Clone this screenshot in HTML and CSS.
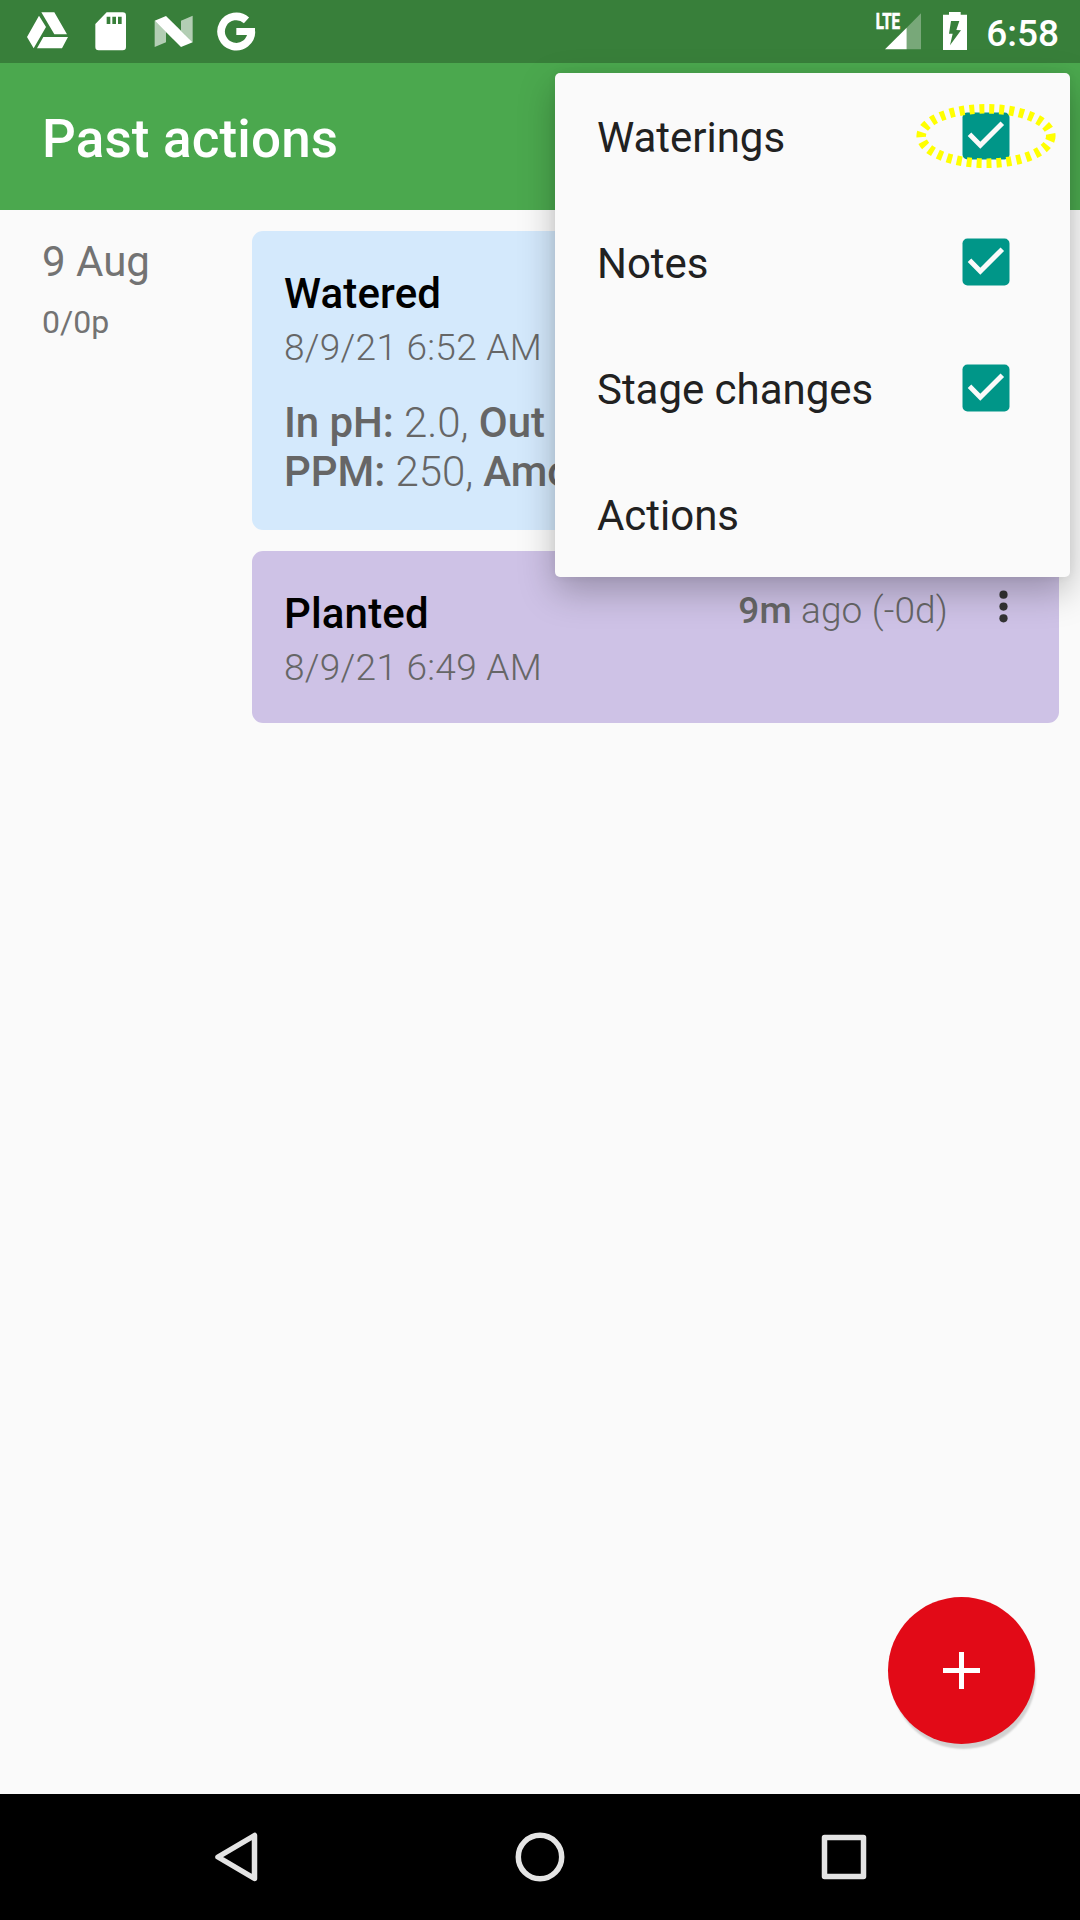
FILE: index.html
```html
<!DOCTYPE html>
<html lang="en">
<head>
<meta charset="utf-8">
<title>Past actions</title>
<link rel="stylesheet" href="styles.css">
</head>
<body>
<div class="screen">
  <header class="status-bar">
    <div class="notifications">
      <svg width="44" height="44" viewBox="78 30 132 132" fill="#fff"><path d="M124 37h39l38 66h-38zM117 47l21 34-37 64-20-34zM130 111h74l-18 34h-75z"/></svg>
      <svg width="34" height="44" viewBox="282 30 102 132" fill="#fff"><path fill-rule="evenodd" d="M320 37h48q10 0 10 10v94q0 10-10 10h-72q-10 0-10-10V72zM320 50v22h11V50zM337 50v22h11V50zM354 50v22h11V50z"/></svg>
      <svg width="42" height="44" viewBox="459 30 126 132" fill="#fff"><path opacity=".62" d="M464 62l34 33v32l-34 14zM543 62l35-15v80l-35-35z"/><path d="M464 62l34-14 80 79-35 14z"/></svg>
      <svg width="41" height="44" viewBox="648 30 123 132"><path fill="none" stroke="#fff" stroke-width="23" d="M739.500 61A45.500 45.500 0 1 0 754.300 94.500"/><path fill="#fff" d="M709 84h56v11l-10 10h-46z"/></svg>
    </div>
    <div class="system">
      <svg class="signal" width="48" height="44" viewBox="105 30 144 132" fill="#fff"><path opacity=".32" d="M200 83l43-43v108h-43z"/><path d="M135 148l65-65v65z"/><text class="lte" x="107" y="87" textLength="73" lengthAdjust="spacingAndGlyphs">LTE</text></svg>
      <svg class="battery" width="26" height="44" viewBox="306 30 78 132" fill="#fff"><path fill-rule="evenodd" d="M327 36h35v8h19v106h-72V44h18zM333 63l-6 38h11l-8 35 33-45-14-1 9-27z"/></svg>
      <span class="clock">6:58</span>
    </div>
  </header>

  <div class="toolbar"><h1>Past actions</h1></div>

  <main class="timeline">
    <div class="day">
      <div class="day-date">9 Aug</div>
      <div class="day-stage">0/0p</div>
    </div>
    <div class="entries">
      <article class="card watered">
        <h2>Watered</h2>
        <div class="time">8/9/21 6:52 AM</div>
        <p class="summary"><b>In pH:</b> 2.0, <b>Out</b><br><b>PPM:</b> 250, <b>Amount</b></p>
      </article>
      <article class="card planted">
        <div class="info">
          <h2>Planted</h2>
          <div class="time">8/9/21 6:49 AM</div>
        </div>
        <div class="ago"><b>9m</b> ago (-0d)</div>
        <svg class="more" width="12" height="34" viewBox="0 0 12 34" fill="#333"><circle cx="5.500" cy="4.700" r="4.100"/><circle cx="5.500" cy="16.600" r="4.100"/><circle cx="5.500" cy="28.300" r="4.100"/></svg>
      </article>
    </div>
  </main>

  <nav class="nav-bar">
    <svg width="50" height="54" viewBox="0 0 50 54"><path d="M43.500 5.500v43L7 27z"/></svg>
    <svg width="54" height="54" viewBox="0 0 54 54"><circle cx="27" cy="27" r="21.700"/></svg>
    <svg width="50" height="54" viewBox="0 0 50 54"><path d="M5.500 7.500h39v39h-39z"/></svg>
  </nav>

  <button class="fab" aria-label="Add"><svg width="37" height="37" viewBox="0 0 37 37" fill="#fff"><path d="M16 0h5v16h16v5H21v16h-5V21H0v-5h16z"/></svg></button>

  <div class="menu">
    <div class="item">Waterings<svg class="check" width="48" height="48" viewBox="0 0 48 48"><rect x=".5" y=".5" width="47" height="47" rx="5"/><path d="M7.500 22.300L18.300 33.200 40.300 11.200"/></svg></div>
    <div class="item">Notes<svg class="check" width="48" height="48" viewBox="0 0 48 48"><rect x=".5" y=".5" width="47" height="47" rx="5"/><path d="M7.500 22.300L18.300 33.200 40.300 11.200"/></svg></div>
    <div class="item">Stage changes<svg class="check" width="48" height="48" viewBox="0 0 48 48"><rect x=".5" y=".5" width="47" height="47" rx="5"/><path d="M7.500 22.300L18.300 33.200 40.300 11.200"/></svg></div>
    <div class="item">Actions</div>
  </div>
  <svg class="highlight" width="142" height="66" viewBox="0 0 142 66"><ellipse cx="71" cy="33" rx="64.800" ry="27.200"/></svg>
</div>
</body>
</html>
```
FILE: styles.css
```css
* { box-sizing: border-box; }
body, h1, h2, p { margin: 0; }
body { font-family: Roboto, sans-serif; background: #fafafa; }
svg { display: block; flex: none; }
b { font-weight: 500; }

.screen {
  position: relative;
  display: flex;
  flex-direction: column;
  width: 1080px;
  height: 1920px;
  overflow: hidden;
}

.status-bar {
  display: flex;
  justify-content: space-between;
  height: 63px;
  padding: 10px 21px 0 26px;
  background: #387f3a;
  color: #fff;
}
.notifications { display: flex; }
.notifications svg:nth-child(2) { margin-left: 24px; }
.notifications svg:nth-child(3) { margin-left: 25px; }
.notifications svg:nth-child(4) { margin-left: 21px; }
.system { display: flex; }
.lte { font: 700 66px Roboto, sans-serif; stroke: #fff; stroke-width: 2px; }
.battery { margin-left: 19px; }
.clock {
  margin-left: 18px;
  font-size: 37px;
  font-weight: 500;
  line-height: 47px;
}

.toolbar {
  display: flex;
  align-items: center;
  height: 147px;
  padding: 5px 42px 0;
  background: #4ba84e;
  color: #fff;
}
h1 { font-size: 53px; font-weight: 500; line-height: 62px; letter-spacing: .15px; }

.timeline {
  flex: 1;
  display: grid;
  grid-template-columns: 210px 807px;
  padding: 21px 21px 0 42px;
}
.day { color: #737373; }
.day-date { font-size: 42px; line-height: 49px; padding-top: 6px; }
.day-stage { font-size: 32px; line-height: 37px; padding-top: 18px; }

.entries { display: flex; flex-direction: column; gap: 21px; }
.card {
  padding: 38px 32px 34px;
  border-radius: 11px;
  color: #666;
  font-weight: 300;
}
.watered { height: 299px; background: #d4e9fc; }
.planted { display: flex; height: 172px; background: #cec2e6; }
.info { flex: 1; }
h2 { font-size: 42px; font-weight: 500; line-height: 49px; letter-spacing: .15px; color: #000; }
.time { margin-top: 8px; font-size: 37px; line-height: 43px; letter-spacing: .28px; }
.summary { margin-top: 29px; font-size: 42px; line-height: 49px; letter-spacing: -.05px; }
.ago { font-size: 37px; line-height: 43px; letter-spacing: .15px; white-space: nowrap; }
.more { margin: 1px 17px 0 50px; }

.nav-bar {
  display: flex;
  justify-content: space-between;
  align-items: center;
  height: 126px;
  padding: 0 211px 0 211px;
  background: #000;
}
.nav-bar svg { fill: none; stroke: #e4e4e4; stroke-width: 5.500px; stroke-linejoin: round; }

.fab {
  position: absolute;
  left: 888px;
  top: 1597px;
  display: flex;
  align-items: center;
  justify-content: center;
  width: 147px;
  height: 147px;
  padding: 0;
  border: 0;
  border-radius: 50%;
  background: #e20a17;
  box-shadow: 2px 6px 2px -1px rgba(0, 0, 0, .16);
}

.menu {
  position: absolute;
  left: 555px;
  top: 73px;
  width: 515px;
  height: 504px;
  border-radius: 5px;
  background: #fafafa;
  color: #212121;
  box-shadow: 0 14px 36px rgba(0, 0, 0, .26), 0 0 8px rgba(0, 0, 0, .06);
}
.item {
  display: flex;
  align-items: center;
  justify-content: space-between;
  height: 126px;
  padding: 2px 60px 0 42px;
  font-size: 42px;
  letter-spacing: -.03px;
}
.check { margin-top: -2px; }
.check rect { fill: #009688; }
.check path { fill: none; stroke: #fafafa; stroke-width: 5px; }

.highlight { position: absolute; left: 915px; top: 103px; }
.highlight ellipse { fill: none; stroke: #ff0; stroke-width: 9.600px; stroke-dasharray: 5 4.950; }
```
